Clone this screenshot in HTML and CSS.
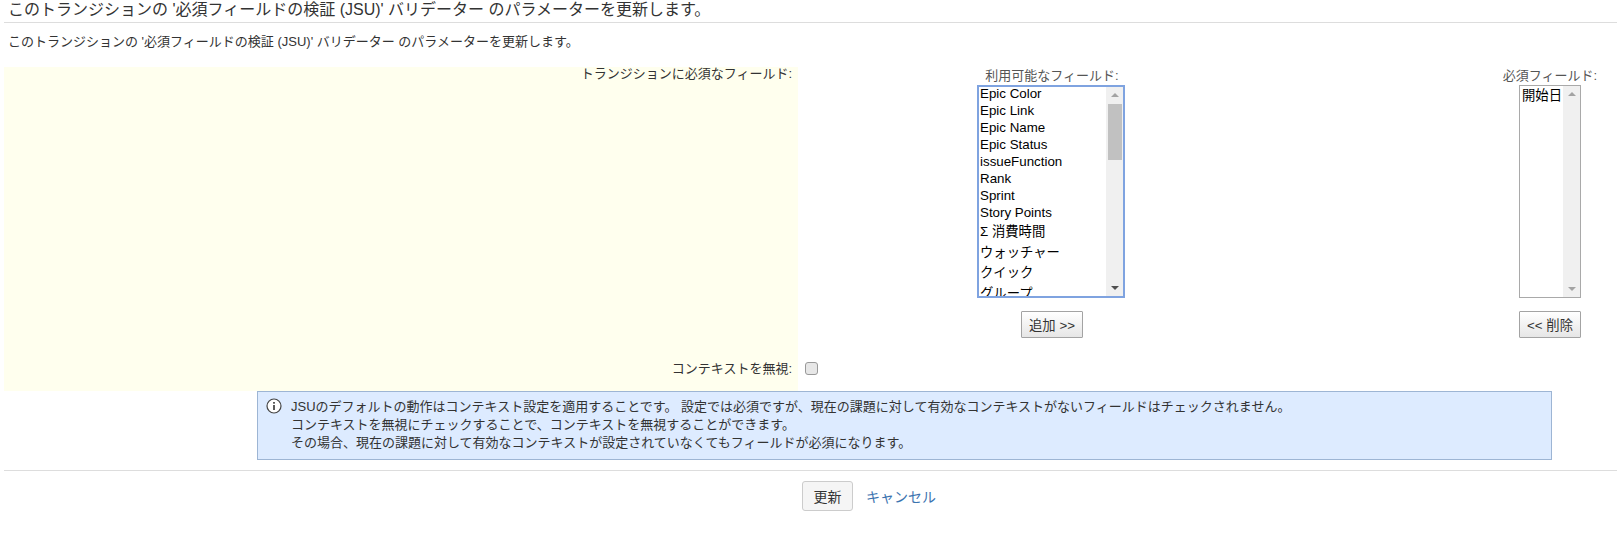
FILE: index.html
```html
<!DOCTYPE html>
<html lang="ja">
<head>
<meta charset="utf-8">
<title>パラメーターを更新</title>
<link rel="stylesheet" href="styles.css">
</head>
<body>
<h2 class="title">このトランジションの '必須フィールドの検証 (JSU)' バリデーター のパラメーターを更新します。</h2>
<p class="desc">このトランジションの '必須フィールドの検証 (JSU)' バリデーター のパラメーターを更新します。</p>
<div class="form">
  <div class="label-col">
    <div class="field-label">トランジションに必須なフィールド:</div>
    <div class="field-label">コンテキストを無視:</div>
  </div>
  <div class="value-col">
    <div class="pickers">
      <div class="picker picker-available">
        <div class="picker-label">利用可能なフィールド:</div>
        <div class="listbox listbox-focus">
          <div class="options">
            <div class="opt">Epic Color</div>
            <div class="opt">Epic Link</div>
            <div class="opt">Epic Name</div>
            <div class="opt">Epic Status</div>
            <div class="opt">issueFunction</div>
            <div class="opt">Rank</div>
            <div class="opt">Sprint</div>
            <div class="opt">Story Points</div>
            <div class="opt opt-cjk opt-cjk-first">Σ 消費時間</div>
            <div class="opt opt-cjk">ウォッチャー</div>
            <div class="opt opt-cjk">クイック</div>
            <div class="opt opt-cjk">グループ</div>
          </div>
          <div class="scrollbar">
            <span class="arrow arrow-up"></span>
            <span class="thumb"></span>
            <span class="arrow arrow-down"></span>
          </div>
        </div>
        <button class="btn" type="button">追加 &gt;&gt;</button>
      </div>
      <div class="picker picker-required">
        <div class="picker-label">必須フィールド:</div>
        <div class="listbox">
          <div class="options">
            <div class="opt opt-cjk">開始日</div>
          </div>
          <div class="scrollbar scrollbar-idle">
            <span class="arrow arrow-up"></span>
            <span class="arrow arrow-down"></span>
          </div>
        </div>
        <button class="btn" type="button">&lt;&lt; 削除</button>
      </div>
    </div>
    <input class="check" type="checkbox">
  </div>
</div>
<div class="info">
  <svg class="info-icon" width="16" height="16" viewBox="0 0 16 16" aria-hidden="true">
    <circle cx="8" cy="8" r="7" fill="#fff" stroke="#444" stroke-width="1.2"/>
    <rect x="7.2" y="7" width="1.6" height="5" fill="#333"/>
    <rect x="7.2" y="4" width="1.6" height="1.7" fill="#333"/>
  </svg>
  <div class="info-text">
    <div>JSUのデフォルトの動作はコンテキスト設定を適用することです。 設定では必須ですが、現在の課題に対して有効なコンテキストがないフィールドはチェックされません。</div>
    <div>コンテキストを無視にチェックすることで、コンテキストを無視することができます。</div>
    <div>その場合、現在の課題に対して有効なコンテキストが設定されていなくてもフィールドが必須になります。</div>
  </div>
</div>
<div class="actions">
  <button class="btn-submit" type="button">更新</button>
  <a class="cancel" href="#">キャンセル</a>
</div>
</body>
</html>
```
FILE: styles.css
```css
* { box-sizing: border-box; }
html, body { margin: 0; padding: 0; }
body {
  width: 1621px;
  height: 533px;
  overflow: hidden;
  background: #fff;
  color: #333;
  font-family: Arial, "Liberation Sans", "Noto Sans CJK JP", sans-serif;
  font-size: 13px;
  padding: 0 4px;
}
.title {
  margin: 0;
  height: 23px;
  padding: 0 0 0 4px;
  border-bottom: 1px solid #ddd;
  font-size: 16px;
  font-weight: 400;
  line-height: 19px;
  white-space: nowrap;
  color: #333;
}
.desc {
  margin: 0;
  height: 44px;
  padding: 10px 0 0 4px;
  line-height: 18px;
  white-space: nowrap;
}
.form { display: flex; height: 324px; }
.label-col {
  flex: none;
  width: 794px;
  background: #ffffee;
  display: flex;
  flex-direction: column;
  justify-content: space-between;
  padding: 0 6px 15px 0;
  text-align: right;
}
.field-label { line-height: 14px; }
.value-col { flex: 1; padding-left: 7px; display: flex; flex-direction: column; justify-content: space-between; padding-bottom: 16px; }
.pickers { display: flex; }
.picker { display: flex; flex-direction: column; align-items: center; }
.picker-available { width: 150px; margin-left: 172px; }
.picker-required { width: 62px; margin-left: 392px; }
.picker-label { height: 18px; line-height: 18px; white-space: nowrap; color: #555; }
.listbox {
  display: flex;
  height: 213px;
  border: 1px solid #a9a9a9;
  background: #fff;
  overflow: hidden;
  width: 100%;
  color: #000;
}
.listbox-focus { border: 2px solid #7fa3e0; width: 148px; align-self: flex-start; }
.options { flex: 1; padding: 0 2px; min-width: 0; font-size: 13.33px; }
.listbox-focus .options { padding: 0 0 0 1px; margin-top: -2px; }
.opt { line-height: 17px; white-space: nowrap; }
.opt-cjk { line-height: 20.5px; }
.opt-cjk-first { margin-top: 1px; }
.scrollbar {
  flex: none;
  width: 17px;
  background: #f0f0f0;
  display: flex;
  flex-direction: column;
  align-items: center;
  padding: 6px 0;
}
.arrow { width: 0; height: 0; border-left: 4px solid transparent; border-right: 4px solid transparent; flex: none; }
.arrow-up { border-bottom: 4px solid #a3a3a3; }
.arrow-down { border-top: 4px solid #505050; margin-top: auto; }
.scrollbar-idle .arrow-down { border-top-color: #a3a3a3; }
.thumb { width: 14px; height: 56px; background: #c1c1c1; margin-top: 7px; flex: none; }
.btn {
  width: 62px;
  height: 27px;
  margin-top: 13px;
  padding: 0;
  border: 1px solid #a3a3a3;
  border-radius: 1px;
  background: linear-gradient(#fff, #e6e6e6);
  color: #333;
  font-family: inherit;
  font-size: 13.33px;
  white-space: nowrap;
}
.check {
  margin: 0;
  width: 13px;
  height: 13px;
  appearance: none;
  background: #e7e7e7;
  border: 1px solid #999;
  border-radius: 3px;
}
.info {
  display: flex;
  gap: 9px;
  width: 1295px;
  height: 69px;
  margin: 0 0 0 253px;
  padding: 6px 8px;
  background: #ddebff;
  border: 1px solid #9db5d4;
}
.info-icon { flex: none; }
.info-text { line-height: 18px; }
.actions {
  margin-top: 10px;
  padding-top: 10px;
  border-top: 1px solid #ddd;
  display: flex;
  align-items: center;
  gap: 13px;
  padding-left: 798px;
}
.btn-submit {
  width: 51px;
  height: 30px;
  padding: 0;
  border: 1px solid #ccc;
  border-radius: 3.01px;
  background: #f5f5f5;
  color: #333;
  font-family: inherit;
  font-size: 14px;
}
.cancel { color: #3b73af; text-decoration: none; font-size: 14px; }
```
